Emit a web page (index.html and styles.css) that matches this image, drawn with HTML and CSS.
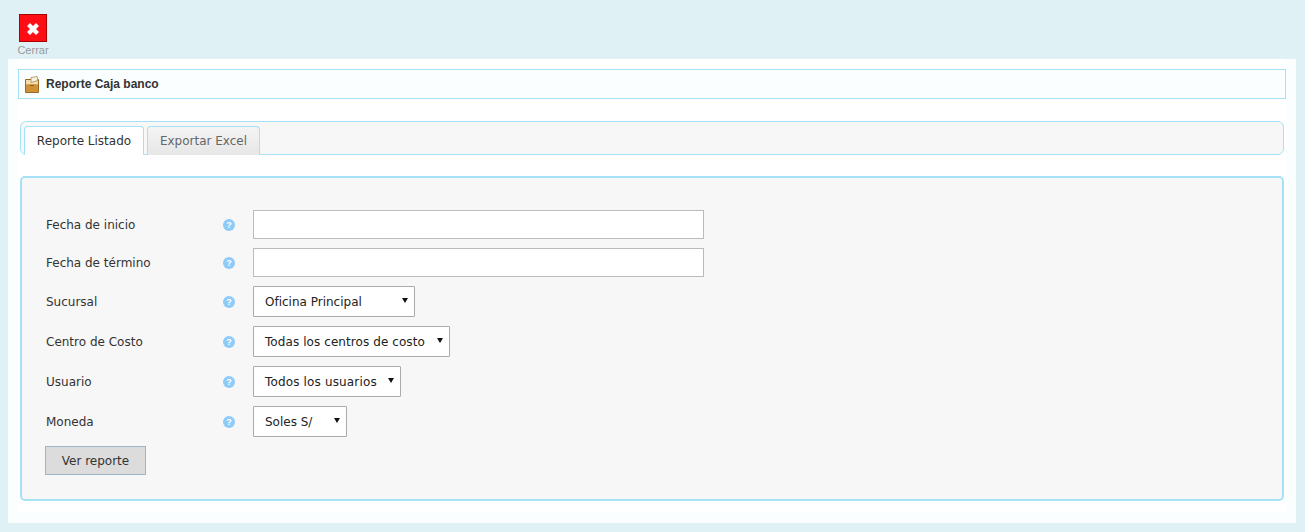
FILE: index.html
```html
<!DOCTYPE html>
<html lang="es">
<head>
<meta charset="utf-8">
<title>Reporte Caja banco</title>
<link rel="stylesheet" href="styles.css">
</head>
<body>
<div class="toolbar">
  <a class="tool">
    <span class="tool-icon"><svg width="12" height="12" viewBox="0 0 12 12"><path d="M0 3 3 0 6 3 9 0 12 3 9 6 12 9 9 12 6 9 3 12 0 9 3 6Z" fill="#fff"/></svg></span>
    <span class="tool-label">Cerrar</span>
  </a>
</div>
<main class="panel">
  <div class="inner">
    <h1 class="title">
      <svg class="title-icon" width="15" height="17" viewBox="0 0 15 17"><path d="M.5 3.500h13v13H.5z" fill="#d9a04c" stroke="#9a6a25"/><path d="M1 4h12v4H1z" fill="#f3dcae"/><path d="M6 1.500l6-1 1 4-7 2z" fill="#f7f1e0" stroke="#a98a55" stroke-width=".8"/><path d="M1 9h12v7H1z" fill="#cf9137"/><path d="M5 9.500h4" stroke="#8c5f20"/></svg>
      Reporte Caja banco
    </h1>
    <nav class="tabs">
      <a class="tab t1 active">Reporte Listado</a>
      <a class="tab t2">Exportar Excel</a>
    </nav>
    <form class="form">
      <div class="row r-input"><label>Fecha de inicio</label><span class="help">?</span><input type="text" class="field"></div>
      <div class="row r-input"><label>Fecha de término</label><span class="help">?</span><input type="text" class="field"></div>
      <div class="row r-sel"><label>Sucursal</label><span class="help">?</span><span class="sel s1">Oficina Principal</span></div>
      <div class="row r-sel"><label>Centro de Costo</label><span class="help">?</span><span class="sel s2">Todas los centros de costo</span></div>
      <div class="row r-sel"><label>Usuario</label><span class="help">?</span><span class="sel s3">Todos los usuarios</span></div>
      <div class="row r-sel"><label>Moneda</label><span class="help">?</span><span class="sel s4">Soles S/</span></div>
      <button type="button" class="btn">Ver reporte</button>
    </form>
  </div>
</main>
</body>
</html>
```
FILE: styles.css
```css
* { box-sizing: border-box; }
html, body { height: 100%; }
body {
  margin: 0;
  padding: 0 9px 9px 8px;
  background: #e0f1f6;
  font-family: "DejaVu Sans", Verdana, sans-serif;
  font-size: 12px;
  color: #333;
  overflow: hidden;
}
.toolbar { height: 59px; padding: 14px 0 0 9px; }
.tool { display: inline-flex; flex-direction: column; align-items: center; width: 32px; }
.tool-icon {
  width: 28px; height: 28px; padding-top: 1px;
  display: flex; align-items: center; justify-content: center;
  background: #ff0d15;
  border: 1px solid #a00;
}
.tool-label {
  font-family: "Liberation Sans", Arial, sans-serif;
  font-size: 11px; line-height: 13px; margin-top: 2px; color: #9a9a9a;
}
.panel { height: 464px; background: #fafeff; padding: 0 10px 10px; }
.inner { height: 454px; background: #fff; padding-top: 10px; }
.title {
  display: flex; align-items: center; gap: 6px;
  height: 30px; margin: 0; padding-left: 6px;
  background: #fafeff;
  border: 1px solid #a5e2f5;
  font-family: "Liberation Sans", Arial, sans-serif;
  font-size: 12px; font-weight: bold; color: #333;
}
.tabs {
  display: flex; gap: 3px;
  height: 34px; margin: 22px 2px 21px; padding: 4px 0 0 3px;
  background: #f7f7f7;
  border: 1px solid #a5e2f5;
  border-radius: 6px;
}
.tab {
  height: 29px;
  display: flex; align-items: center; justify-content: center;
  background: linear-gradient(#f4f4f4, #e6e6e6);
  border: 1px solid #a5e2f5; border-bottom: 0;
  border-radius: 4px 4px 0 0;
  color: #666;
}
.t1 { width: 120px; }
.t2 { width: 113px; }
.tab.active { background: #fff; color: #333; }
.form {
  height: 325px; margin: 0 2px;
  padding: 32px 0 0 23px;
  background: #f7f7f7;
  border: 2px solid #a5e2f5;
  border-radius: 5px;
}
.row { display: flex; align-items: center; }
.r-input { height: 29px; margin-bottom: 9px; }
.r-sel { height: 31px; margin-bottom: 9px; }
.row label { width: 178px; padding-left: 1px; }
.help {
  width: 12px; height: 12px; margin-right: 18px; border-radius: 50%;
  background: #8ecbf9; color: #fff;
  font: bold 9px/12px "Liberation Sans", Arial, sans-serif; text-align: center;
}
.field { width: 451px; height: 29px; background: #fff; border: 1px solid #bbb; }
.sel {
  position: relative;
  display: flex; align-items: center;
  height: 31px; padding-left: 11px;
  background: #fff; border: 1px solid #aaa; border-radius: 1px;
  color: #222;
}
.sel::after {
  content: ""; position: absolute; right: 6px; top: 11px;
  border: 3.500px solid transparent; border-top: 5px solid #111; border-bottom: 0;
}
.s1 { width: 162px; }
.s2 { width: 197px; letter-spacing: .08px; }
.s3 { width: 148px; letter-spacing: .15px; }
.s4 { width: 94px; }
.btn {
  display: block; width: 101px; height: 29px; margin: 0;
  background: #dcdcdc; border: 1px solid #9fb4cc;
  font: 12px "DejaVu Sans", Verdana, sans-serif; color: #333;
}
```
